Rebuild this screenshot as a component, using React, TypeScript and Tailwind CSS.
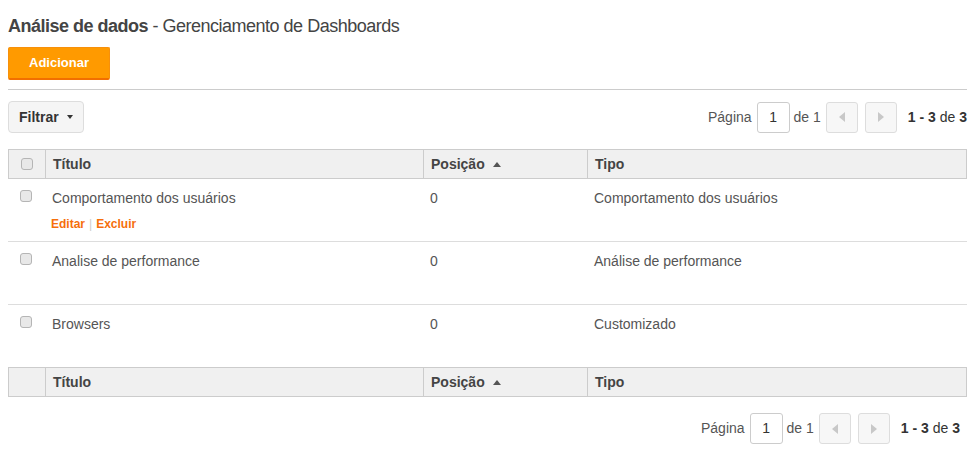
import React from "react";

const rows = [
  { title: "Comportamento dos usuários", pos: "0", tipo: "Comportamento dos usuários", actions: true },
  { title: "Analise de performance", pos: "0", tipo: "Análise de performance", actions: false },
  { title: "Browsers", pos: "0", tipo: "Customizado", actions: false },
];

function Box() {
  return <span className="inline-block w-[12px] h-[12px] rounded-[3px] border border-[#b5b5b5] bg-[#e8e8e8]" />;
}

function Pager() {
  return (
    <div className="flex items-center text-[14px] text-[#555]">
      <span>Página</span>
      <div className="ml-[5px] w-[33px] h-[31px] border border-[#ccc] rounded-[3px] flex items-center justify-center text-[#333]">1</div>
      <span className="ml-[4px]">de 1</span>
      <button className="ml-[5px] w-[32px] h-[31px] border border-[#ddd] rounded-[3px] bg-[#f7f7f7] flex items-center justify-center">
        <svg width="6" height="10" viewBox="0 0 6 10"><path d="M6 0 L0 5 L6 10 Z" fill="#c8c8c8" /></svg>
      </button>
      <button className="ml-[7px] w-[32px] h-[31px] border border-[#ddd] rounded-[3px] bg-[#f7f7f7] flex items-center justify-center">
        <svg width="6" height="10" viewBox="0 0 6 10"><path d="M0 0 L6 5 L0 10 Z" fill="#c8c8c8" /></svg>
      </button>
      <span className="ml-[11px] text-[#333]">
        <b>1 - 3</b> de <b>3</b>
      </span>
    </div>
  );
}

function Head({ check }: { check: boolean }) {
  return (
    <div className="grid grid-cols-[37px_378px_164px_1fr] h-[30px] bg-[#f0f0f0] border border-[#ccc] text-[14px] font-bold text-[#444]">
      <div className="border-r border-[#ccc] flex items-center justify-center">{check && <Box />}</div>
      <div className="border-r border-[#ccc] flex items-center pl-[7px]">Título</div>
      <div className="border-r border-[#ccc] flex items-center pl-[7px] gap-[8px]">
        Posição
        <svg width="8" height="5" viewBox="0 0 8 5"><path d="M0 5 L4 0 L8 5 Z" fill="#555" /></svg>
      </div>
      <div className="flex items-center pl-[7px]">Tipo</div>
    </div>
  );
}

export default function App() {
  return (
    <div className="w-[975px] h-[465px] bg-white px-[8px] font-['Liberation_Sans',Arial,sans-serif] overflow-hidden">
      <h1 className="pt-[15px] text-[18px] leading-[22px] text-[#444] tracking-[-0.5px]">
        <b>Análise de dados</b> - Gerenciamento de Dashboards
      </h1>
      <button className="mt-[10px] w-[102px] h-[33px] bg-[#ff9a00] border border-[#f7900b] border-b-[2px] border-b-[#f26f00] rounded-[2px] text-white text-[13px] font-bold">
        Adicionar
      </button>
      <hr className="mt-[9px] border-t border-[#cccccc]" />
      <div className="mt-[11px] flex items-center justify-between">
        <button className="h-[32px] px-[10px] bg-[#f5f5f5] border border-[#ddd] rounded-[4px] text-[14px] font-bold text-[#333] flex items-center gap-[8px]">
          Filtrar
          <svg width="6" height="4" viewBox="0 0 6 4"><path d="M0 0 L6 0 L3 4 Z" fill="#333" /></svg>
        </button>
        <Pager />
      </div>
      <div className="mt-[16px]">
        <Head check={true} />
        {rows.map((r, i) => (
          <div
            key={r.title}
            className={
              i < rows.length - 1
                ? "grid grid-cols-[37px_378px_164px_1fr] h-[63px] border-b border-[#ddd] text-[14px] text-[#555]"
                : "grid grid-cols-[37px_378px_164px_1fr] h-[62px] text-[14px] text-[#555]"
            }
          >
            <div className="flex justify-center pt-[11px] pr-[2px]"><Box /></div>
            <div className="pl-[7px] pt-[10px]">
              <div className="leading-[18px]">{r.title}</div>
              {r.actions && (
                <div className="mt-[8px] text-[12px] font-bold text-[#f66f0c] flex items-center">
                  <span className="-ml-[1px]">Editar</span>
                  <span className="mx-[4px] font-normal text-[#ccc]">|</span>
                  <span>Excluir</span>
                </div>
              )}
            </div>
            <div className="pl-[7px] pt-[10px] leading-[18px]">{r.pos}</div>
            <div className="pl-[7px] pt-[10px] leading-[18px]">{r.tipo}</div>
          </div>
        ))}
        <Head check={false} />
      </div>
      <div className="mt-[16px] flex justify-end pr-[7px]">
        <Pager />
      </div>
    </div>
  );
}
